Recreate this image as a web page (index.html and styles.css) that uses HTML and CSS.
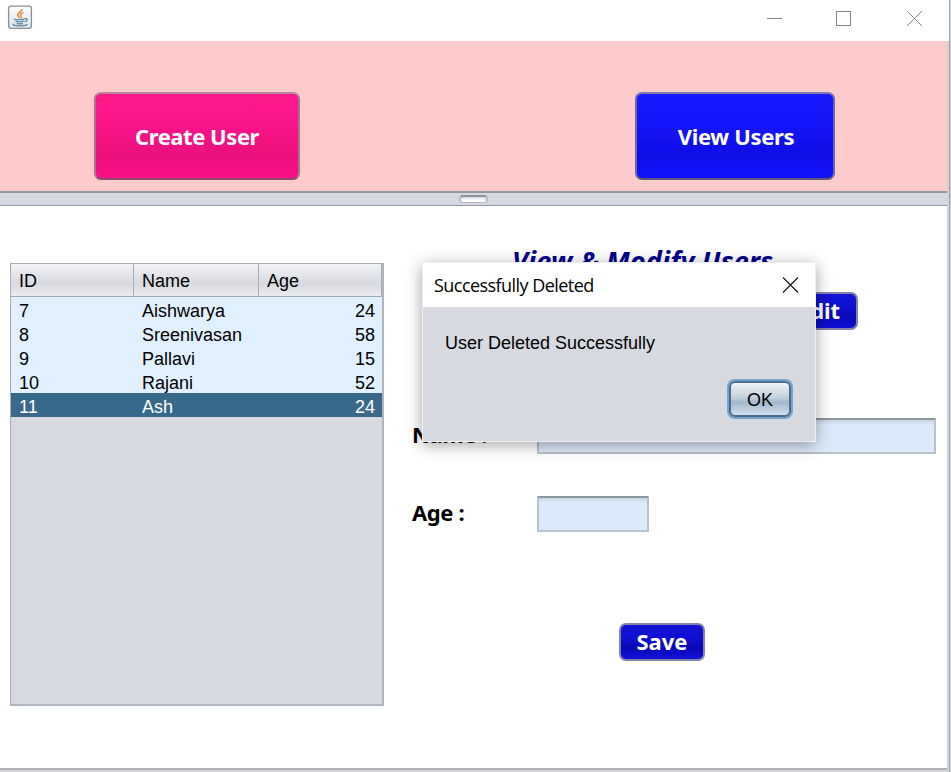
FILE: index.html
```html
<!DOCTYPE html>
<html lang="en">
<head>
<meta charset="utf-8">
<title>Users</title>
<link rel="stylesheet" href="styles.css">
</head>
<body>
<div class="desktop">
<div class="window">
  <header class="titlebar">
    <svg class="app-icon" width="26" height="26" viewBox="0 0 26 26">
      <defs><linearGradient id="tile" x1="0" y1="0" x2="0" y2="1"><stop offset="0" stop-color="#fff"/><stop offset="1" stop-color="#d9e3e8"/></linearGradient></defs>
      <rect x="1.6" y="2.100" width="22.8" height="22.3" rx="2.5" fill="url(#tile)" stroke="#85929a" stroke-width="1.3"/>
      <path d="M14.8 5c.8 3-4.800 3.500-4.100 6.300.2 1 1.300 1.800 1.700 2.600M16.500 8.500c-2.500.9-4 2.200-2.600 3.700.5.600.1 1.300-.5 1.800" fill="none" stroke="#e4934e" stroke-width="1.700"/>
      <path d="M7.500 14.800c-2 1 7 1.300 10.600 0M8.500 17.200c2.500.9 6 .8 8.500 0M9.500 19.300c2 .6 4.500.6 6.500 0M18.300 14.600c3-.6 2.500 2.500-.7 3.300M7.300 20c-3.500 1.200 2 2 6.400 1.800 3.500-.1 6-.6 6.800-1.700" fill="none" stroke="#6389a5" stroke-width="1.300"/>
    </svg>
    <svg class="controls" width="160" height="20" viewBox="0 0 160 20" fill="none" stroke="#858585" stroke-width="1">
      <path d="M2 10.500h15"/><rect x="71.500" y="3.500" width="14" height="14"/><path d="M142 3l15 15M157 3l-15 15"/>
    </svg>
  </header>
  <nav class="toolbar">
    <button class="big create">Create User</button>
    <button class="big view">View Users</button>
  </nav>
  <div class="divider"><span class="grip"></span></div>
  <main class="content">
    <div class="table-pane">
      <table>
        <colgroup><col class="c-id"><col class="c-name"><col></colgroup>
        <thead><tr><th>ID</th><th>Name</th><th>Age</th></tr></thead>
        <tbody>
          <tr><td>7</td><td>Aishwarya</td><td>24</td></tr>
          <tr><td>8</td><td>Sreenivasan</td><td>58</td></tr>
          <tr><td>9</td><td>Pallavi</td><td>15</td></tr>
          <tr><td>10</td><td>Rajani</td><td>52</td></tr>
          <tr class="selected"><td>11</td><td>Ash</td><td>24</td></tr>
        </tbody>
      </table>
    </div>
    <section class="form">
      <h1>View &amp; Modify Users</h1>
      <div class="edit-row"><button class="small edit">Edit</button></div>
      <div class="field name-field"><label>Name :</label><span class="input wide"></span></div>
      <div class="field age-field"><label>Age :</label><span class="input"></span></div>
      <div class="save-row"><button class="small">Save</button></div>
    </section>
  </main>
</div>
<div class="dialog">
  <div class="dialog-title"><span>Successfully Deleted</span>
    <svg width="17" height="17" viewBox="0 0 17 17" fill="none" stroke="#111" stroke-width="1.100"><path d="M1 .5l15 15M16 .5L1 15.500"/></svg>
  </div>
  <div class="dialog-body">
    <p>User Deleted Successfully</p>
    <button class="ok">OK</button>
  </div>
</div>
</div>
</body>
</html>
```
FILE: styles.css
```css
* { box-sizing: border-box; }
body { margin: 0; font-family: "Liberation Sans", Arial, sans-serif; font-size: 18px; color: #000; overflow: hidden; }
button { font: inherit; margin: 0; padding: 0; }

.desktop { position: relative; width: 951px; height: 772px; padding-right: 4px; background: linear-gradient(to right, #d0d2d6 949px, #a4a6aa 949px, #a4a6aa 950px, #cdd3da 950px); }
.window { height: 770px; background: #fff; border-bottom: 2px solid #b2b2b2; }

.titlebar { height: 41px; display: flex; justify-content: space-between; padding: 4px 24px 0 7px; margin-right: -2px; background: #fff; }
.controls { margin-top: 4px; }
.app-icon { display: block; }

.toolbar { height: 150px; background: #ffcaca; display: flex; justify-content: space-between; padding: 51px 112px 0 94px; }
.big, .small { font-family: "Noto Sans", "DejaVu Sans", sans-serif; font-weight: 700; font-size: 22px; color: #fff; }
.big { height: 88px; border: 2px solid; border-radius: 7px; letter-spacing: -.45px; }
.create { width: 206px; border-color: #b8869a #a8708c #8a4a6c; background: linear-gradient(#ff1a8c, #fa148a 35%, #ea107c 72%, #fb108a); }
.view { width: 200px; letter-spacing: -.35px; padding-left: 2px; border-color: #7c78b0 #6c68a8 #5c5878; background: linear-gradient(#1a1aff, #1414f8 40%, #0e0ee8 72%, #1212ff); }

.divider { height: 15px; background: #d5d8e0; border-top: 2px solid #96979f; border-bottom: 1px solid #92979f; display: flex; justify-content: center; padding: 2px 1px 0 0; }
.grip { width: 29px; height: 8px; border: 2px solid; border-color: #8f949c #b8bcc4 #b3b7be; border-bottom-width: 1px; border-radius: 4px; background: linear-gradient(#d6dae0, #fff 70%); }

.content { display: flex; gap: 28px; padding: 57px 0 0 10px; }
.table-pane { width: 374px; height: 443px; flex: none; border: 1px solid #a9adb8; border-right: 2px solid #b0b4be; border-bottom: 2px solid #b0b4be; background: #d6d9e0; }
table { width: 100%; border-collapse: separate; border-spacing: 0; table-layout: fixed; }
.c-id { width: 123px; }
.c-name { width: 125px; }
th { height: 33px; padding: 2px 8px 0; text-align: left; font-weight: 400; border-right: 1px solid #a9adb8; border-bottom: 1px solid #a0a4b0; background: linear-gradient(#f2f3f6, #dfe0e5 45%, #d7d9df 60%, #ececf1); }
td { height: 24px; line-height: 20px; padding: 4px 8px 0; background: #e1f0ff; }
td:last-child { text-align: right; padding-right: 7px; }
.selected td { background: #39698a; color: #fff; }

.form { width: 524px; font-family: "Noto Sans", "DejaVu Sans", sans-serif; }
h1 { margin: -20px 0 0 100px; height: 40px; line-height: 36px; font-size: 27px; letter-spacing: .15px; font-style: italic; font-weight: 700; color: #00008b; white-space: nowrap; }
.edit-row { display: flex; justify-content: flex-end; padding: 9px 78px 0 0; }
.small { width: 86px; height: 38px; line-height: 30px; padding-bottom: 2px; border: 2px solid #8285a8; border-radius: 7px; background: linear-gradient(#1414d8, #0f0fd0 40%, #0808b4 65%, #1010d8); }
.edit { width: 78px; }
.field { display: flex; align-items: center; height: 36px; }
.name-field { margin-top: 88px; }
.age-field { margin-top: 42px; }
label { width: 124.5px; font-size: 22px; line-height: 30px; margin-top: -5px; font-weight: 700; letter-spacing: -.4px; }
.input { width: 112px; height: 36px; border: 2px solid #b7c3cc; border-top-color: #8b979f; background: linear-gradient(#c6d4e0, #dceafc 5px); }
.wide { width: 399.500px; }
.save-row { margin: 91px 0 0 207px; }

.dialog { position: absolute; left: 422px; top: 262px; width: 394px; height: 180px; border: 1px solid #eceef1; background: #d6d9e0; box-shadow: 0 3px 15px rgba(0,0,0,.36); }
.dialog-title { height: 44px; background: #fff; display: flex; align-items: center; justify-content: space-between; padding: 0 16px 0 11px; font-family: "Open Sans", "Noto Sans", sans-serif; font-size: 18px; letter-spacing: -.55px; }
.dialog-body { display: flex; flex-direction: column; padding: 25px 24px 0 22px; }
.dialog-body p { margin: 0; line-height: 22px; }
.ok { align-self: flex-end; width: 62px; height: 36px; line-height: 34px; margin-top: 27px; border: 2px solid #4a6c8c; border-radius: 6px; background: linear-gradient(#edf2f7, #c3d1de 45%, #a3b8cc 60%, #cfe0f0); box-shadow: 0 0 0 2px #73a4d1; }
```
